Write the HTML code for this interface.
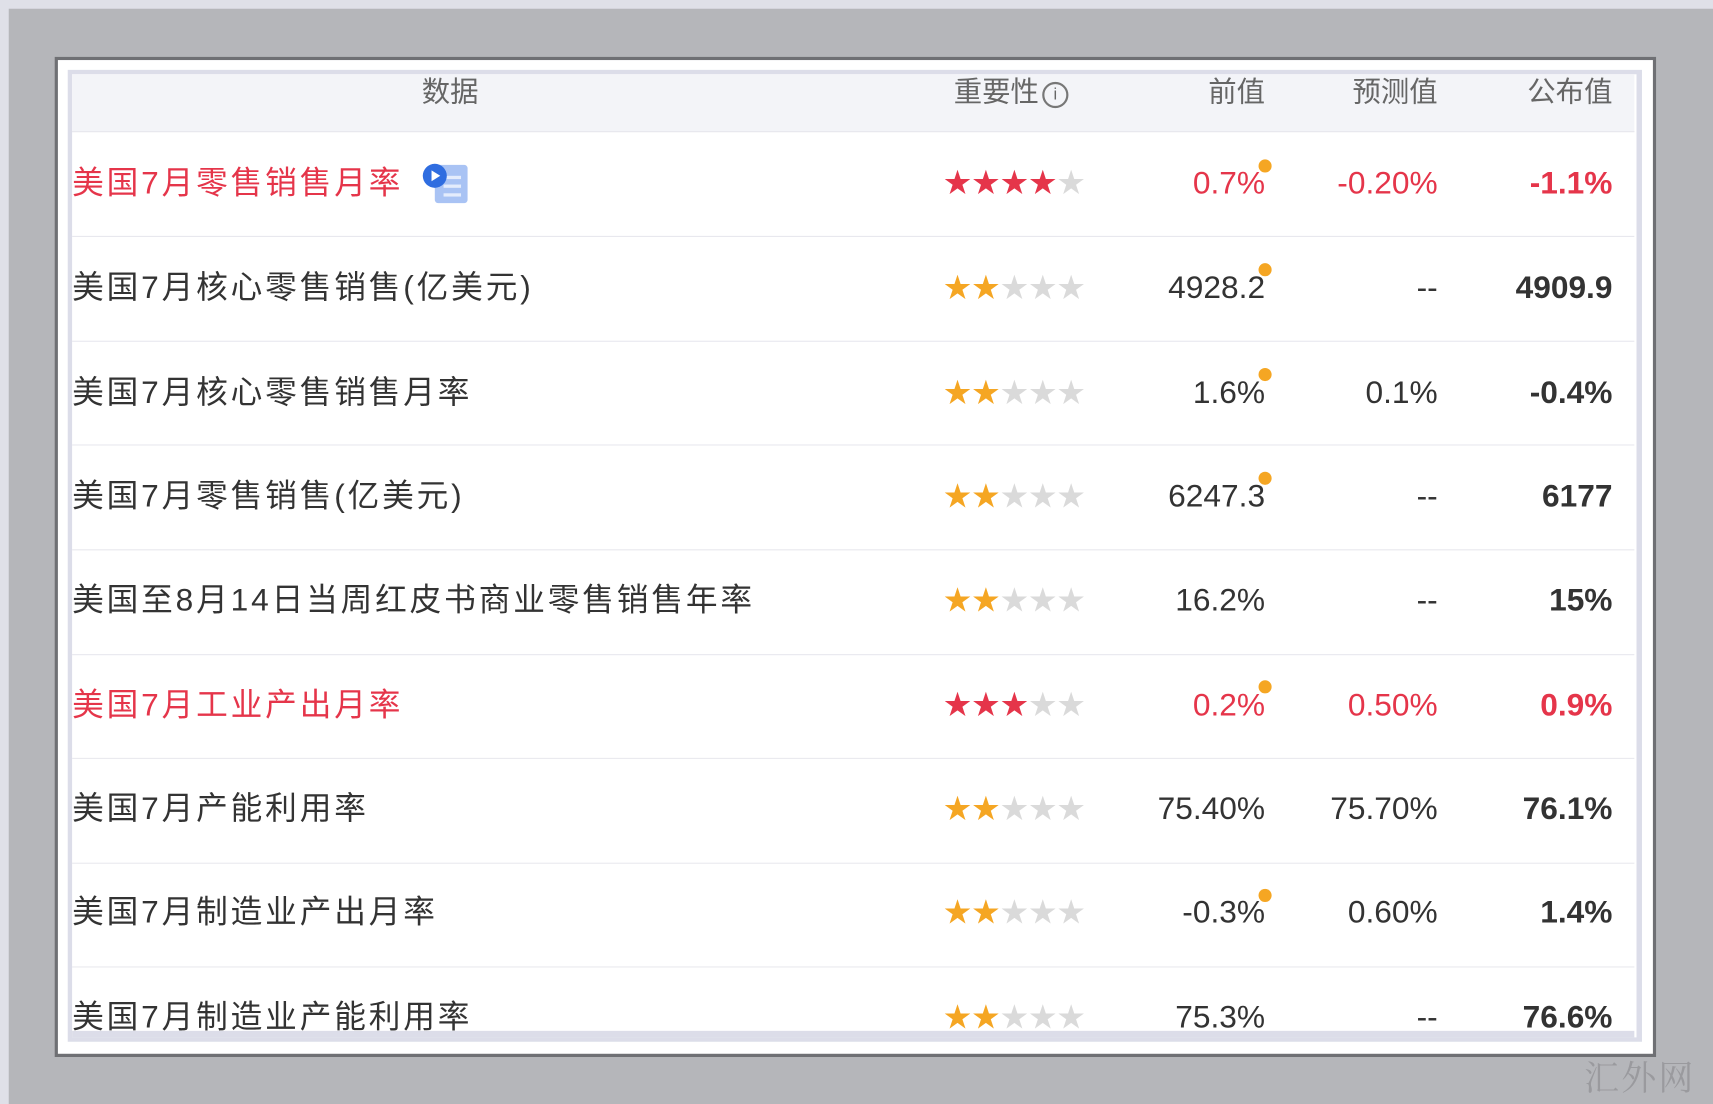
<!DOCTYPE html>
<html><head><meta charset="utf-8"><style>
html,body{margin:0;padding:0;width:1713px;height:1104px;overflow:hidden;background:#dfe0e8}
#w{position:absolute;left:0;top:0;width:1568px;height:1011px;transform:scale(1.09247,1.09199);transform-origin:0 0;font-family:"Liberation Sans","Noto Sans CJK SC",sans-serif}
.gray{position:absolute;left:8px;top:8px;right:0;bottom:0;background:#b5b6ba}
.frame{position:absolute;left:50px;top:52px;width:1460px;height:910px;border:3px solid #6f7074;background:#fff}
.inner{position:absolute;left:62px;top:64px;width:1432px;height:882px;border:4px solid #dcdde9;border-right-width:5px}
.hdr{position:absolute;left:66px;top:68px;width:1430px;height:52px;background:#f3f4f8;border-bottom:1px solid #e6e7ee}
.t{position:absolute;font-size:29px;white-space:nowrap;line-height:34px;color:#333}
.n{letter-spacing:2.6px}
.h{color:#666;font-size:26px}
.r{text-align:right}
.red{color:#e5354a}
.b{font-weight:bold}
.sep{position:absolute;left:66px;width:1430px;height:1px;background:#e8e8ee}
.st{position:absolute;left:864px;font-size:25px;letter-spacing:1px;line-height:30px}
.dot{position:absolute;width:12px;height:12px;border-radius:50%;background:#f5a623}
.wm{position:absolute;left:1450px;top:962px;font-family:"Noto Serif CJK SC",serif;font-size:32px;color:#9a9a9e;letter-spacing:2px}
</style></head><body><div id="w">
<div class="gray"></div>
<div class="frame"></div>
<div class="inner"></div>
<div class="hdr"></div>
<div class="t h" style="left:386px;top:67px">数据</div>
<div class="t h" style="left:873px;top:67px">重要性<span style="display:inline-block;width:20px;height:20px;border:2px solid #777;border-radius:50%;font-size:15px;line-height:20px;text-align:center;vertical-align:2px;margin-left:3px">i</span></div>
<div class="t h r" style="right:410px;top:67px">前值</div>
<div class="t h r" style="right:252px;top:67px">预测值</div>
<div class="t h r" style="right:92px;top:67px">公布值</div>

<div class="sep" style="top:120px"></div><div class="sep" style="top:216px"></div><div class="sep" style="top:312px"></div><div class="sep" style="top:407px"></div><div class="sep" style="top:503px"></div><div class="sep" style="top:599px"></div><div class="sep" style="top:694px"></div><div class="sep" style="top:790px"></div><div class="sep" style="top:885px"></div>

<div class="t n red" style="left:66px;top:151px">美国7月零售销售月率</div>
<svg style="position:absolute;left:386px;top:149px" width="44" height="38"><rect x="12" y="2" width="30" height="35" rx="3" fill="#a9c3f4"/><rect x="20" y="12" width="16" height="3" fill="#e4ecfc"/><rect x="20" y="20" width="16" height="3" fill="#e4ecfc"/><rect x="20" y="28" width="16" height="3" fill="#e4ecfc"/><circle cx="12" cy="12" r="11" fill="#2f6de0"/><path d="M9 7 L17 12 L9 17Z" fill="#fff"/></svg>
<div class="st" style="top:153px"><span style="color:#e5354a">★★★★</span><span style="color:#dadada">★</span></div>
<div class="t r red" style="right:410px;top:151px">0.7%</div><div class="dot" style="left:1152px;top:146px"></div>
<div class="t r red" style="right:252px;top:151px">-0.20%</div>
<div class="t r red b" style="right:92px;top:151px">-1.1%</div>

<div class="t n" style="left:66px;top:247px">美国7月核心零售销售(亿美元)</div>
<div class="st" style="top:249px"><span style="color:#f5a623">★★</span><span style="color:#dadada">★★★</span></div>
<div class="t r" style="right:410px;top:247px">4928.2</div><div class="dot" style="left:1152px;top:241px"></div>
<div class="t r" style="right:252px;top:247px">--</div>
<div class="t r b" style="right:92px;top:247px">4909.9</div>

<div class="t n" style="left:66px;top:343px">美国7月核心零售销售月率</div>
<div class="st" style="top:345px"><span style="color:#f5a623">★★</span><span style="color:#dadada">★★★</span></div>
<div class="t r" style="right:410px;top:343px">1.6%</div><div class="dot" style="left:1152px;top:337px"></div>
<div class="t r" style="right:252px;top:343px">0.1%</div>
<div class="t r b" style="right:92px;top:343px">-0.4%</div>

<div class="t n" style="left:66px;top:438px">美国7月零售销售(亿美元)</div>
<div class="st" style="top:440px"><span style="color:#f5a623">★★</span><span style="color:#dadada">★★★</span></div>
<div class="t r" style="right:410px;top:438px">6247.3</div><div class="dot" style="left:1152px;top:432px"></div>
<div class="t r" style="right:252px;top:438px">--</div>
<div class="t r b" style="right:92px;top:438px">6177</div>

<div class="t n" style="left:66px;top:533px">美国至8月14日当周红皮书商业零售销售年率</div>
<div class="st" style="top:535px"><span style="color:#f5a623">★★</span><span style="color:#dadada">★★★</span></div>
<div class="t r" style="right:410px;top:533px">16.2%</div>
<div class="t r" style="right:252px;top:533px">--</div>
<div class="t r b" style="right:92px;top:533px">15%</div>

<div class="t n red" style="left:66px;top:629px">美国7月工业产出月率</div>
<div class="st" style="top:631px"><span style="color:#e5354a">★★★</span><span style="color:#dadada">★★</span></div>
<div class="t r red" style="right:410px;top:629px">0.2%</div><div class="dot" style="left:1152px;top:623px"></div>
<div class="t r red" style="right:252px;top:629px">0.50%</div>
<div class="t r red b" style="right:92px;top:629px">0.9%</div>

<div class="t n" style="left:66px;top:724px">美国7月产能利用率</div>
<div class="st" style="top:726px"><span style="color:#f5a623">★★</span><span style="color:#dadada">★★★</span></div>
<div class="t r" style="right:410px;top:724px">75.40%</div>
<div class="t r" style="right:252px;top:724px">75.70%</div>
<div class="t r b" style="right:92px;top:724px">76.1%</div>

<div class="t n" style="left:66px;top:819px">美国7月制造业产出月率</div>
<div class="st" style="top:821px"><span style="color:#f5a623">★★</span><span style="color:#dadada">★★★</span></div>
<div class="t r" style="right:410px;top:819px">-0.3%</div><div class="dot" style="left:1152px;top:814px"></div>
<div class="t r" style="right:252px;top:819px">0.60%</div>
<div class="t r b" style="right:92px;top:819px">1.4%</div>

<div class="t n" style="left:66px;top:915px">美国7月制造业产能利用率</div>
<div class="st" style="top:917px"><span style="color:#f5a623">★★</span><span style="color:#dadada">★★★</span></div>
<div class="t r" style="right:410px;top:915px">75.3%</div>
<div class="t r" style="right:252px;top:915px">--</div>
<div class="t r b" style="right:92px;top:915px">76.6%</div>
<div style="position:absolute;left:66px;top:944px;width:1430px;height:6px;background:#dcdde9"></div>

<div class="wm">汇外网</div>
</div></body></html>
